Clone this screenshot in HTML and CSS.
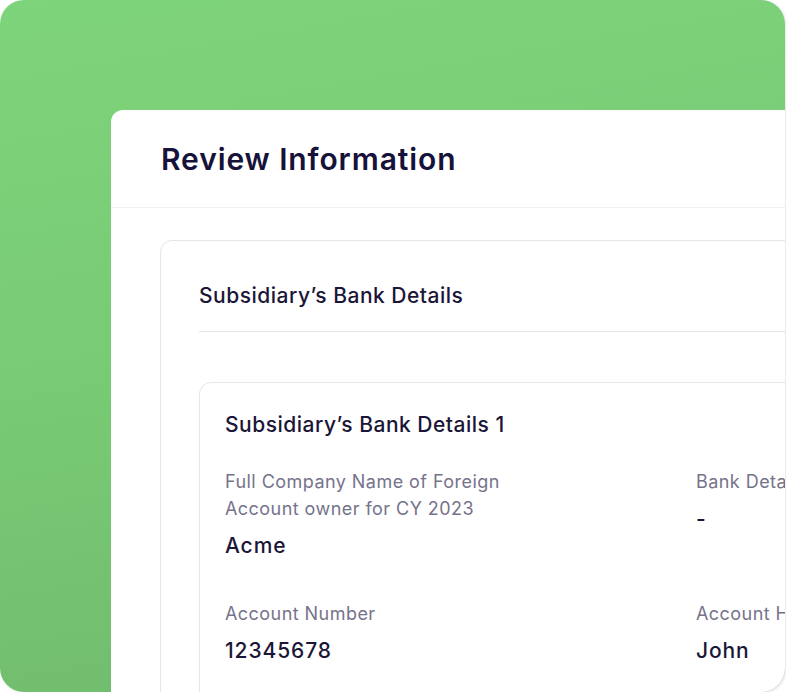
FILE: index.html
```html
<!DOCTYPE html>
<html>
<head>
<meta charset="utf-8">
<link rel="stylesheet" href="styles.css">
</head>
<body>
<div class="frame">
  <div class="panel">
    <div class="panel-header">
      <h1 class="panel-title">Review Information</h1>
    </div>
    <div class="panel-body">
      <div class="section">
        <h2 class="section-title">Subsidiary’s Bank Details</h2>
        <div class="divider"></div>
        <div class="card">
          <h3 class="card-title">Subsidiary’s Bank Details 1</h3>
          <div class="fields">
            <div class="field">
              <div class="label">Full Company Name of Foreign Account owner for CY 2023</div>
              <div class="value">Acme</div>
            </div>
            <div class="field">
              <div class="label nowrap">Bank Details</div>
              <div class="value">-</div>
            </div>
            <div class="field">
              <div class="label">Account Number</div>
              <div class="value">12345678</div>
            </div>
            <div class="field">
              <div class="label nowrap">Account Holder</div>
              <div class="value">John</div>
            </div>
          </div>
        </div>
      </div>
    </div>
  </div>
</div>
</body>
</html>
```

FILE: styles.css
```css
* { box-sizing: border-box; }
html, body { margin: 0; padding: 0; background: #ffffff; }
body { font-family: Inter, "Noto Sans", "Liberation Sans", sans-serif; }

.frame {
  width: 785px;
  height: 692px;
  border-radius: 24px;
  overflow: hidden;
  background: linear-gradient(170deg, #7ed47b 0%, #79cb75 45%, #6fb96c 100%);
  box-shadow: 1px 1px 3px rgba(0,0,0,0.12);
  padding-top: 110px;
  padding-left: 111px;
}

.panel {
  width: 760px;
  height: 640px;
  background: #ffffff;
  border-top-left-radius: 12px;
}

.panel-header {
  padding: 31px 50px 30px;
  border-bottom: 1px solid #f0f0f4;
}

.panel-title {
  margin: 0;
  font-size: 30px;
  line-height: 36px;
  font-weight: 600;
  color: #17123a;
  letter-spacing: 0.9px;
}

.panel-body {
  padding: 32px 0 0 49px;
}

.section {
  width: 700px;
  height: 500px;
  border: 1px solid #e6e6ec;
  border-radius: 12px;
  padding: 41px 0 0 38px;
}

.section-title {
  margin: 0;
  font-size: 21px;
  line-height: 28px;
  font-weight: 500;
  color: #1b1637;
  letter-spacing: 0.5px;
}

.divider {
  margin-top: 21px;
  height: 1px;
  background: #e4e4ea;
}

.card {
  margin-top: 50px;
  width: 680px;
  height: 400px;
  border: 1px solid #e6e6ec;
  border-radius: 12px;
  padding: 28px 0 0 25px;
}

.card-title {
  margin: 0;
  font-size: 21px;
  line-height: 28px;
  font-weight: 500;
  color: #1b1637;
  letter-spacing: 0.5px;
}

.fields {
  margin-top: 29px;
  display: grid;
  grid-template-columns: 300px 300px;
  column-gap: 171px;
  row-gap: 40px;
}

.label {
  font-size: 18px;
  line-height: 27px;
  color: #75738b;
  letter-spacing: 0.45px;
}

.nowrap { white-space: nowrap; }

.value {
  margin-top: 10px;
  font-size: 21px;
  line-height: 28px;
  font-weight: 500;
  color: #1b1637;
  letter-spacing: 0.9px;
}
```
